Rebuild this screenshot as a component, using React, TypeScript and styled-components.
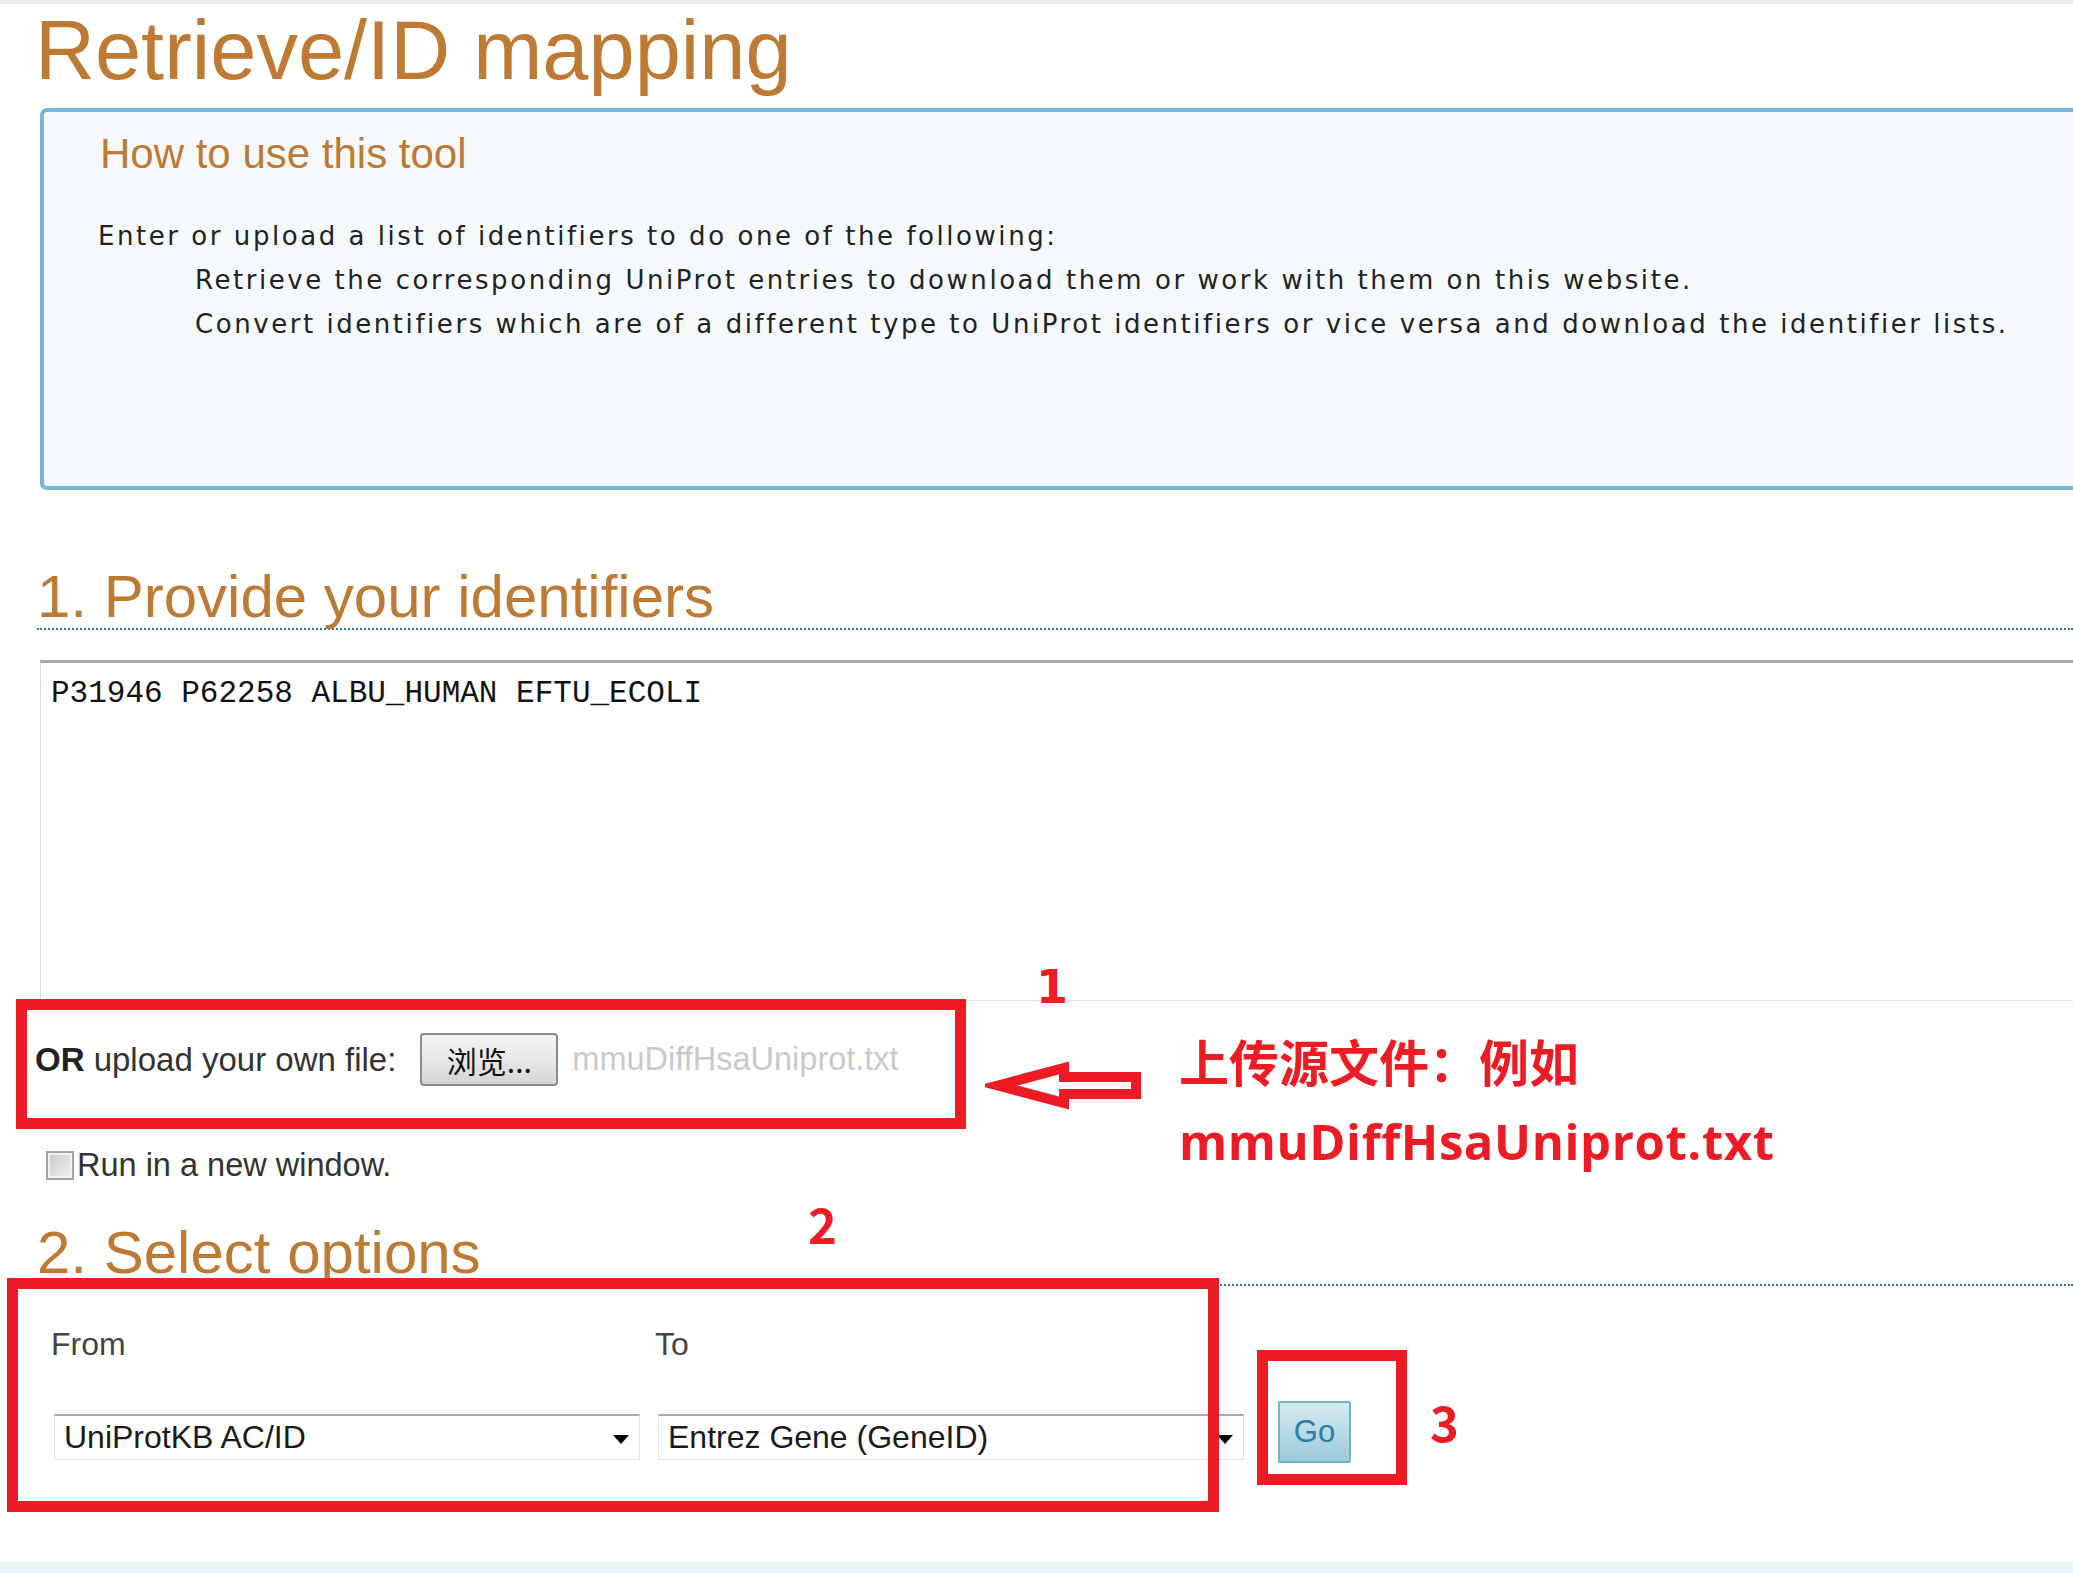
import React from 'react';
import styled, { createGlobalStyle } from 'styled-components';

const GlobalStyle = createGlobalStyle`
  html, body {
    margin: 0;
    padding: 0;
    background: #fff;
    overflow: hidden;
  }
  body {
    font-family: "Liberation Sans", Arial, sans-serif;
    color: #333;
  }
`;

const ORANGE = '#be7a32';
const RED = '#ed1c24';

const Sheet = styled.div`
  position: relative;
  width: 2073px;
  height: 1573px;
  overflow: hidden;
`;

const TopStrip = styled.div`
  height: 4px;
  background: #ececec;
`;

const Content = styled.main`
  padding: 6px 0 0 35px;
`;

const Title = styled.h1`
  margin: 0;
  font-size: 83px;
  line-height: 81px;
  font-weight: 400;
  color: ${ORANGE};
`;

const InfoBox = styled.section`
  box-sizing: border-box;
  height: 382px;
  margin: 17px -60px 0 5px;
  padding: 19px 0 0 56px;
  border: 4px solid #73b8d1;
  border-radius: 7px;
  background: #f5f9fb;
`;

const InfoTitle = styled.h3`
  margin: 0;
  font-size: 42px;
  line-height: 46px;
  font-weight: 400;
  color: ${ORANGE};
`;

const InfoText = styled.p<{ $indent?: boolean }>`
  margin: 0;
  padding-left: ${(p) => (p.$indent ? '95px' : '0')};
  font-family: "DejaVu Sans", Verdana, sans-serif;
  font-size: 26px;
  line-height: 44px;
  letter-spacing: 2.55px;
  color: #222;
`;

const InfoLead = styled(InfoText)`
  margin-top: 37px;
  margin-left: -2px;
`;

const SectionHeading = styled.h2<{ $gap: number }>`
  margin: ${(p) => p.$gap}px 0 0 2px;
  font-size: 60px;
  line-height: 63px;
  font-weight: 400;
  color: ${ORANGE};
  border-bottom: 2px dotted #1f7ea1;
`;

const IdsArea = styled.textarea`
  display: block;
  box-sizing: border-box;
  width: calc(100% + 40px);
  height: 341px;
  margin: 30px 0 0 5px;
  padding: 13px 0 0 10px;
  border: none;
  border-top: 3px solid #a9a9a9;
  border-left: 1px solid #d6dbe0;
  border-bottom: 1px solid #dde2e7;
  font-family: "Liberation Mono", "Courier New", monospace;
  font-size: 31px;
  color: #111;
  background: #fff;
  resize: none;
  outline: none;
`;

const UploadRow = styled.div`
  display: flex;
  align-items: center;
  height: 53px;
  margin-top: 32px;
  font-size: 33px;
  color: #333;
`;

const Strong = styled.b`
  font-weight: 700;
  color: #222;
`;

const BrowseButton = styled.button`
  box-sizing: border-box;
  width: 138px;
  height: 53px;
  margin-left: 24px;
  padding: 0;
  border: 2px solid #8c8c8c;
  border-radius: 4px;
  background: linear-gradient(#f4f4f4, #e8e8e8 50%, #d4d4d4);
  font-family: "Noto Sans CJK SC", sans-serif;
  font-size: 30px;
  color: #111;
`;

const FileName = styled.span`
  margin-left: 14px;
  font-size: 32.5px;
  color: #c9c9c9;
`;

const CheckRow = styled.label`
  display: flex;
  align-items: center;
  margin-top: 61px;
  font-size: 32.5px;
  color: #333;
`;

const CheckBox = styled.span`
  box-sizing: border-box;
  width: 28px;
  height: 29px;
  margin: 0 3px 0 11px;
  border: 2px solid #a2a2a2;
  box-shadow: inset 0 0 0 2px #f2f2f2;
  background: linear-gradient(135deg, #c9c9c9, #f2f2f2);
`;

const OptionsRow = styled.div`
  display: flex;
  align-items: flex-end;
  gap: 18px;
  margin: 40px 0 0 19px;
`;

const Field = styled.div`
  display: flex;
  flex-direction: column;
  gap: 51px;
  width: 586px;
`;

const FieldLabel = styled.span`
  margin-left: -3px;
  font-size: 32px;
  color: #444;
`;

const SelectBox = styled.div`
  position: relative;
  box-sizing: border-box;
  height: 46px;
  padding-left: 9px;
  border: 1px solid #dde2e7;
  border-top: 2px solid #aaaaaa;
  font-size: 32px;
  line-height: 42px;
  color: #1a1a1a;
  background: #fff;

  &::after {
    content: '';
    position: absolute;
    right: 10px;
    top: 19px;
    border-left: 8px solid transparent;
    border-right: 8px solid transparent;
    border-top: 9px solid #000;
  }
`;

const GoButton = styled.button`
  box-sizing: border-box;
  width: 73px;
  height: 62px;
  margin: 0 0 -3px 16px;
  padding: 0;
  border: 2px solid #6fb2cb;
  border-radius: 2px;
  background: linear-gradient(#d4eaf1, #9ccadb);
  font-family: "Liberation Sans", Arial, sans-serif;
  font-size: 31px;
  color: #2a7fa9;
`;

const Footer = styled.footer`
  height: 60px;
  margin: 102px -40px 0 -35px;
  background: #eaf3f8;
`;

/* annotation layer drawn over the page */

const Mark = styled.div<{ $x: number; $y: number; $w: number; $h: number }>`
  position: absolute;
  left: ${(p) => p.$x}px;
  top: ${(p) => p.$y}px;
  width: ${(p) => p.$w}px;
  height: ${(p) => p.$h}px;
  box-sizing: border-box;
  border: 11px solid ${RED};
  pointer-events: none;
`;

const StepNumber = styled.span<{ $x: number; $y: number; $serif?: boolean }>`
  position: absolute;
  left: ${(p) => p.$x}px;
  top: ${(p) => p.$y}px;
  font-family: ${(p) =>
    p.$serif ? '"DejaVu Sans", sans-serif' : '"Noto Sans CJK SC", sans-serif'};
  font-size: ${(p) => (p.$serif ? 46 : 49)}px;
  font-weight: 700;
  line-height: 1;
  color: ${RED};
`;

const ArrowMark = styled.svg`
  position: absolute;
  left: 985px;
  top: 1058px;
`;

const Note = styled.div`
  position: absolute;
  left: 1179px;
  top: 1035px;
  display: flex;
  flex-direction: column;
  gap: 26px;
  color: ${RED};
  font-weight: 700;
`;

const NoteCn = styled.span`
  font-family: "Noto Sans CJK SC", sans-serif;
  font-size: 50px;
  line-height: 50px;
`;

const NoteFile = styled.span`
  font-family: "Open Sans", sans-serif;
  font-size: 49px;
  line-height: 60px;
  letter-spacing: 0.6px;
`;

export default function App() {
  return (
    <Sheet>
      <GlobalStyle />
      <TopStrip />
      <Content>
        <Title>Retrieve/ID mapping</Title>

        <InfoBox>
          <InfoTitle>How to use this tool</InfoTitle>
          <InfoLead>Enter or upload a list of identifiers to do one of the following:</InfoLead>
          <InfoText $indent>
            Retrieve the corresponding UniProt entries to download them or work with them on this website.
          </InfoText>
          <InfoText $indent>
            Convert identifiers which are of a different type to UniProt identifiers or vice versa and download the identifier lists.
          </InfoText>
        </InfoBox>

        <SectionHeading $gap={75}>1. Provide your identifiers</SectionHeading>
        <IdsArea readOnly value="P31946 P62258 ALBU_HUMAN EFTU_ECOLI" />

        <UploadRow>
          <span>
            <Strong>OR</Strong> upload your own file:
          </span>
          <BrowseButton>浏览...</BrowseButton>
          <FileName>mmuDiffHsaUniprot.txt</FileName>
        </UploadRow>

        <CheckRow>
          <CheckBox />
          Run in a new window.
        </CheckRow>

        <SectionHeading $gap={37}>2. Select options</SectionHeading>

        <OptionsRow>
          <Field>
            <FieldLabel>From</FieldLabel>
            <SelectBox>UniProtKB AC/ID</SelectBox>
          </Field>
          <Field>
            <FieldLabel>To</FieldLabel>
            <SelectBox>Entrez Gene (GeneID)</SelectBox>
          </Field>
          <GoButton>Go</GoButton>
        </OptionsRow>

        <Footer />
      </Content>

      <Mark $x={16} $y={999} $w={950} $h={130} />
      <Mark $x={7} $y={1278} $w={1212} $h={234} />
      <Mark $x={1257} $y={1350} $w={150} $h={135} />

      <StepNumber $x={1036} $y={964} $serif>
        1
      </StepNumber>
      <StepNumber $x={808} $y={1198}>
        2
      </StepNumber>
      <StepNumber $x={1430} $y={1396}>
        3
      </StepNumber>

      <ArrowMark width="162" height="55" viewBox="0 0 162 55">
        <polygon
          points="13,27.5 79,10 79,19 151,19 151,36 79,36 79,45"
          fill="#fff"
          stroke={RED}
          strokeWidth="10"
          strokeLinejoin="miter"
        />
      </ArrowMark>

      <Note>
        <NoteCn>上传源文件：例如</NoteCn>
        <NoteFile>mmuDiffHsaUniprot.txt</NoteFile>
      </Note>
    </Sheet>
  );
}
